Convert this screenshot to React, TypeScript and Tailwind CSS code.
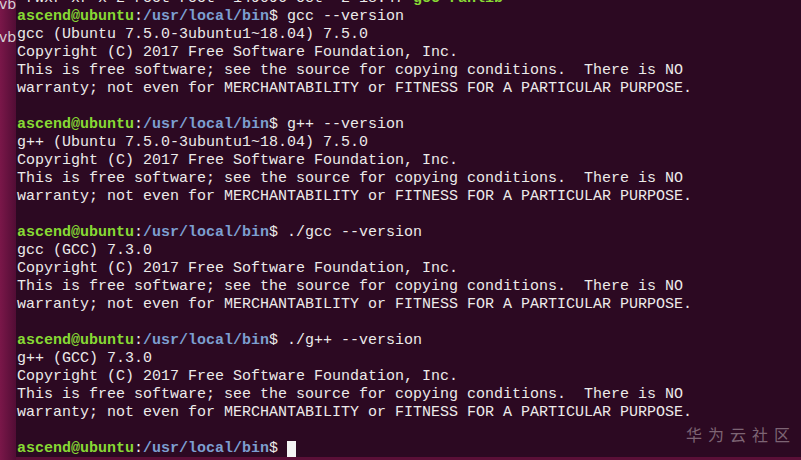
import React from "react";

const out = (t: string) => ({ kind: "out" as const, text: t });
const cmd = (t: string) => ({ kind: "cmd" as const, text: t });

const copyright = [
  out("Copyright (C) 2017 Free Software Foundation, Inc."),
  out("This is free software; see the source for copying conditions.  There is NO"),
  out("warranty; not even for MERCHANTABILITY or FITNESS FOR A PARTICULAR PURPOSE."),
  out(""),
];

const lines = [
  cmd("gcc --version"),
  out("gcc (Ubuntu 7.5.0-3ubuntu1~18.04) 7.5.0"),
  ...copyright,
  cmd("g++ --version"),
  out("g++ (Ubuntu 7.5.0-3ubuntu1~18.04) 7.5.0"),
  ...copyright,
  cmd("./gcc --version"),
  out("gcc (GCC) 7.3.0"),
  ...copyright,
  cmd("./g++ --version"),
  out("g++ (GCC) 7.3.0"),
  ...copyright,
];

function Prompt() {
  return (
    <>
      <span className="font-bold text-[#87d934]">ascend@ubuntu</span>
      <span>:</span>
      <span className="font-bold text-[#7c9fd0]">/usr/local/bin</span>
      <span>$ </span>
    </>
  );
}

function Terminal() {
  return (
    <div className="relative h-[457px] overflow-hidden bg-[#2c0922] pl-px font-['Liberation_Mono',monospace] text-[15px] leading-[18px] text-[#ecebea]">
      <div className="-mt-[10px]">
        <div className="h-[18px] whitespace-pre">
          {"-rwxr-xr-x 2 root root  149096 Oct  2 18:47 "}
          <span className="font-bold text-[#87d934]">gcc-ranlib</span>
        </div>
        {lines.map((l, i) => (
          <div key={i} className="h-[18px] whitespace-pre">
            {l.kind === "cmd" ? (
              <>
                <Prompt />
                {l.text}
              </>
            ) : (
              l.text
            )}
          </div>
        ))}
        <div className="flex h-[18px] items-center whitespace-pre">
          <Prompt />
          <span className="inline-block h-[17px] w-[9px] bg-[#f4f4f4]" />
        </div>
      </div>
      <div className="absolute bottom-[15px] right-[5px] font-['Noto_Sans_CJK_SC',sans-serif] text-[16px] leading-none tracking-[6px] text-[#7d6474]">
        华为云社区
      </div>
    </div>
  );
}

export default function App() {
  return (
    <div className="flex h-[460px] w-[801px] overflow-hidden bg-[#5a0f37]">
      <div className="w-4 shrink-0 overflow-hidden bg-gradient-to-r from-[#7a1749] to-[#520d35] font-['DejaVu_Sans',sans-serif] text-[14px] leading-none text-[#d6d0d4]">
        <div className="-ml-[1px] -mt-[3px] whitespace-pre">vb</div>
        <div className="-ml-[1px] mt-[19px] whitespace-pre">vb</div>
      </div>
      <div className="flex-1">
        <Terminal />
      </div>
    </div>
  );
}
